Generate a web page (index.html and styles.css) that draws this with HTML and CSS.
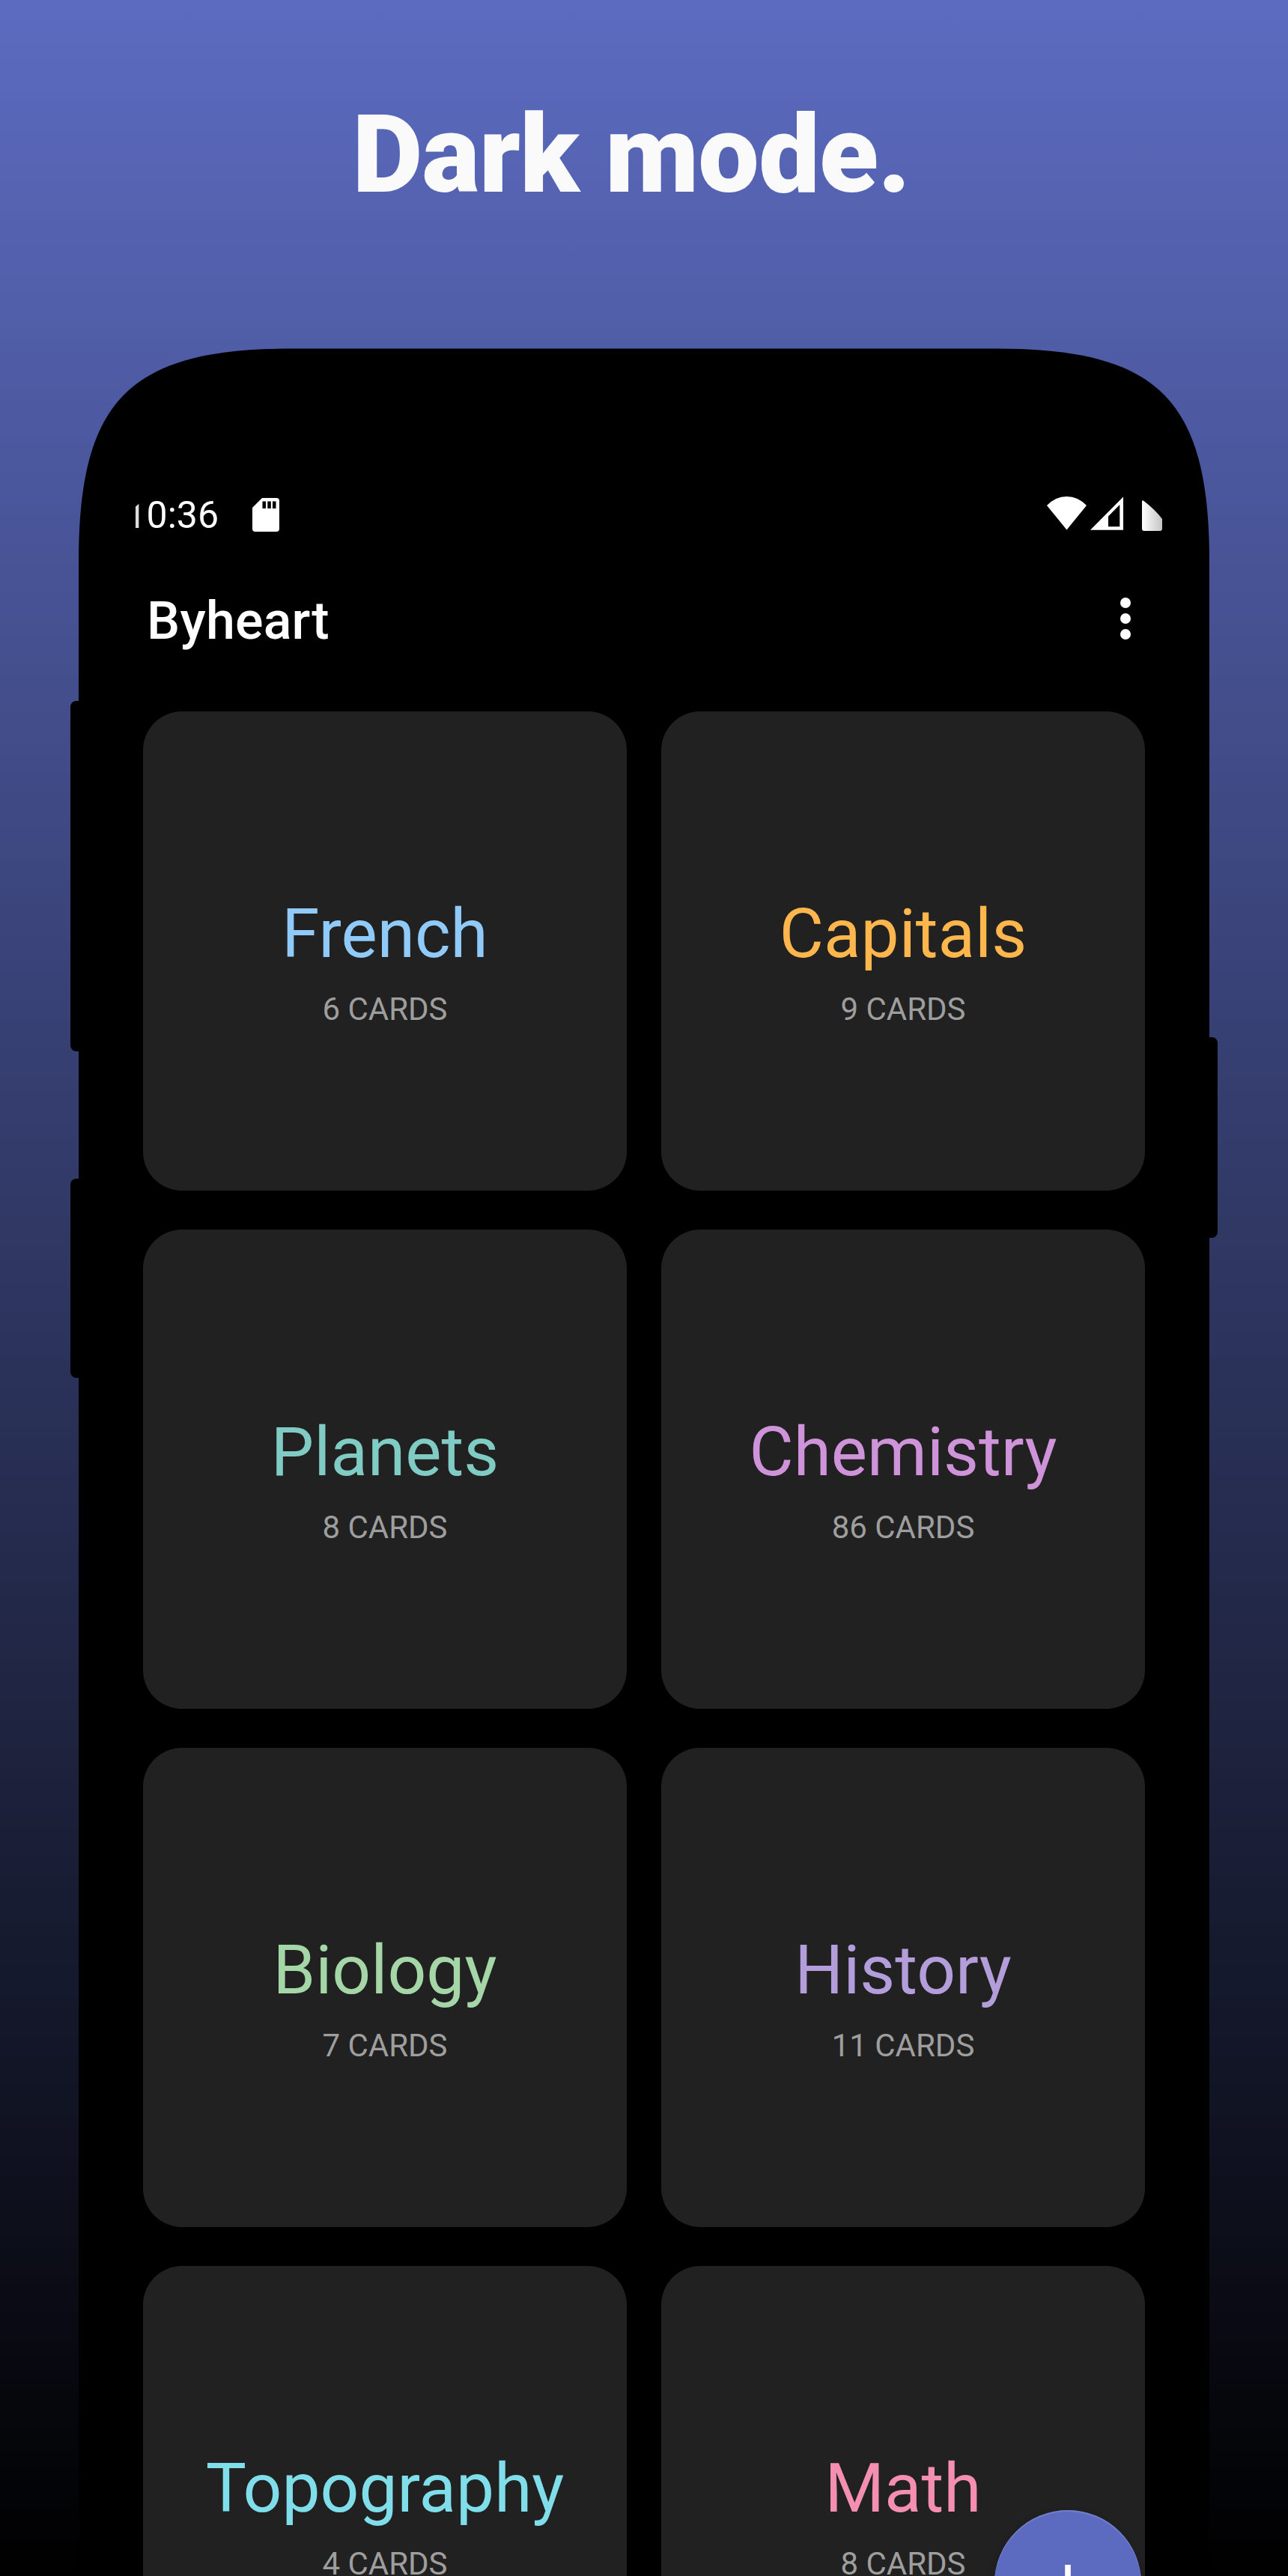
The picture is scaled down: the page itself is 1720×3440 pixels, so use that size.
FILE: index.html
```html
<!DOCTYPE html>
<html lang="en">
<head>
<meta charset="utf-8">
<title>Byheart</title>
<link rel="stylesheet" href="styles.css">
</head>
<body>
<main class="promo">
  <h1 class="headline">Dark mode.</h1>
  <section class="phone">
    <svg class="shell" viewBox="0 0 1530 2976" aria-hidden="true">
      <path d="M11 2976V286.500C11 69.500 79 1.500 296 1.500H1236C1453 1.500 1521 69.500 1521 286.500V2976Z"/>
      <rect x="0" y="472" width="30" height="468" rx="8"/>
      <rect x="0" y="1110" width="30" height="266" rx="8"/>
      <rect x="1502" y="921" width="30" height="268" rx="8"/>
    </svg>
    <div class="screen">
      <div class="status">
        <span class="clock">10:36</span>
        <svg class="sd" viewBox="0 0 36 45"><path d="M13 0H32Q36 0 36 4V41Q36 45 32 45H4Q0 45 0 41V13Z"/><path class="cut" d="M13.500 4.500h4.500v9.500h-4.500zM20.300 4.500h4.500v9.500h-4.500zM27 4.500h4.500v9.500h-4.500z"/></svg>
        <svg class="signals" viewBox="0 0 154 46">
          <defs><linearGradient id="fade"><stop offset="0" stop-color="#fff"/><stop offset="1" stop-color="#c4c4c4"/></linearGradient></defs>
          <path d="M0 12Q11.500 0 26.500 0T53 12L26.500 44.500Z"/>
          <path fill-rule="evenodd" d="M58 44.700L102 0.500V44.700ZM82 26.500V40.300H97.300V11Z"/>
          <path fill="url(#fade)" d="M127 7Q127 4 129.500 6Q145 18 154 30V43Q154 46 151 46H130Q127 46 127 43Z"/>
        </svg>
      </div>
      <header class="bar">
        <span class="brand">Byheart</span>
        <svg class="more" viewBox="0 0 14 56"><circle cx="7" cy="7" r="7"/><circle cx="7" cy="28" r="7"/><circle cx="7" cy="49" r="7"/></svg>
      </header>
      <div class="grid">
        <article class="card blue"><h2>French</h2><p>6 CARDS</p></article>
        <article class="card orange"><h2>Capitals</h2><p>9 CARDS</p></article>
        <article class="card teal"><h2>Planets</h2><p>8 CARDS</p></article>
        <article class="card purple"><h2>Chemistry</h2><p>86 CARDS</p></article>
        <article class="card green"><h2>Biology</h2><p>7 CARDS</p></article>
        <article class="card violet"><h2>History</h2><p>11 CARDS</p></article>
        <article class="card cyan"><h2>Topography</h2><p>4 CARDS</p></article>
        <article class="card pink"><h2>Math</h2><p>8 CARDS</p></article>
      </div>
    </div>
    <button class="fab" aria-label="Add"><svg viewBox="0 0 50 50"><path d="M21.200 0h7.600v21.200H50v7.600H28.800V50h-7.600V28.800H0v-7.600h21.200z"/></svg></button>
  </section>
</main>
</body>
</html>
```
FILE: styles.css
```css
* { box-sizing: border-box; margin: 0; }
body { font-family: Roboto, sans-serif; background: #000; }
.promo { height: 3440px; overflow: hidden; background: linear-gradient(#5c6bc0, #000); display: flow-root; }
.headline { margin-top: 122px; height: 342px; padding-right: 34px; text-align: center; font-size: 145px; line-height: 169px; letter-spacing: -0.7px; font-weight: 900; color: #fafafa; }
.phone { position: relative; width: 1530px; height: 2976px; margin-left: 94px; }
.shell { position: absolute; inset: 0; width: 100%; height: 100%; overflow: visible; }
.screen { position: relative; padding: 196px 72px 0 84px; }
.status { display: flex; align-items: center; height: 54px; fill: #fff; color: #fff; }
.clock { font-size: 50px; line-height: 60px; width: 156px; margin-left: 3px; padding-top: 1px; text-indent: -13.5px; overflow: hidden; clip-path: polygon(0 20px, 6px 15px, 13px 0, 100% 0, 100% 100%, 0 100%); mask-image: linear-gradient(90deg, rgba(0, 0, 0, .85), #000 24px); }
.sd { width: 36px; height: 45px; }
.cut { fill: #000; }
.signals { width: 154px; height: 46px; margin-left: auto; margin-bottom: 2px; }
.bar { display: flex; align-items: center; justify-content: space-between; height: 100px; margin-top: 65px; padding: 0 42px 0 18px; fill: #fff; color: #fff; }
.brand { font-size: 70px; font-weight: 500; letter-spacing: .2px; }
.more { width: 14px; height: 56px; margin-bottom: 6px; }
.grid { display: grid; grid-template-columns: 646px 646px; gap: 52px 46px; margin: 71px 0 0 13px; }
.card { height: 640px; padding-top: 243px; border-radius: 52px; background: #212121; text-align: center; }
.card h2 { font-size: 91px; line-height: 108px; font-weight: 400; }
.card p { margin-top: 22px; font-size: 42px; line-height: 50px; color: #9e9e9e; }
.blue h2 { color: #90caf9; }
.orange h2 { color: #ffb74d; }
.teal h2 { color: #80cbc4; }
.purple h2 { color: #ce93d8; }
.green h2 { color: #a5d6a7; }
.violet h2 { color: #b39ddb; }
.cyan h2 { color: #80deea; }
.pink h2 { color: #f48fb1; }
.fab { display: grid; place-items: center; position: absolute; left: 1234px; top: 2888px; width: 196px; height: 196px; padding: 0; border: 0; border-radius: 50%; background: #5c6bc0; box-shadow: inset 0 2px 1px #7180ca, 0 4px 10px rgba(0, 0, 0, .25); fill: #fff; }
.fab svg { width: 50px; height: 50px; }
```
